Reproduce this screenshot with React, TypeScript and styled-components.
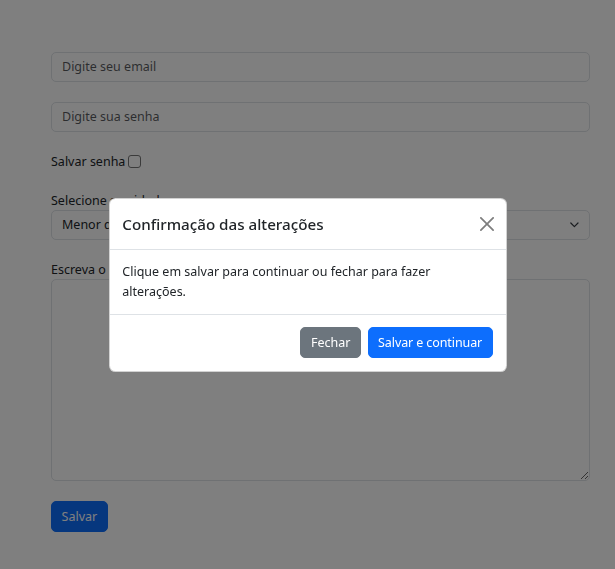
import React from "react";
import styled, { createGlobalStyle } from "styled-components";

const Global = createGlobalStyle`
  *, *::before, *::after { box-sizing: border-box; }
  html, body { margin: 0; padding: 0; background: #fff; }
  body {
    font-family: "Noto Sans", "Open Sans", sans-serif;
    font-size: 12.5px;
    line-height: 19.2px;
    color: #212529;
  }
`;

const Page = styled.div`
  padding: 51.5px 25px 40px 51px;
`;

const Form = styled.form`
  display: flex;
  flex-direction: column;
  gap: 20px;
`;

const Input = styled.input`
  display: block;
  width: 100%;
  height: 30px;
  padding: 0 10px;
  font: inherit;
  color: #212529;
  background: #fff;
  border: 1px solid #dee2e6;
  border-radius: 5px;
  outline: none;
  &::placeholder { color: rgba(33, 37, 41, 0.75); }
`;

const CheckRow = styled.label`
  display: flex;
  align-items: center;
  gap: 3px;
  height: 19.2px;
`;

const CheckBox = styled.span`
  display: inline-block;
  width: 13px;
  height: 13px;
  border: 1px solid #767676;
  border-radius: 3px;
  background: #fff;
  margin-top: 1px;
`;

const Group = styled.div`
  display: flex;
  flex-direction: column;
`;

const Label = styled.label`
  display: block;
  line-height: 19.2px;
`;

const SelectWrap = styled.div`
  position: relative;
  height: 30px;
`;

const Select = styled.select`
  appearance: none;
  width: 100%;
  height: 30px;
  padding: 0 36px 0 10px;
  font: inherit;
  color: #212529;
  background: #fff;
  border: 1px solid #dee2e6;
  border-radius: 5px;
  outline: none;
`;

const Chevron = styled.svg`
  position: absolute;
  right: 9.6px;
  top: 10px;
  width: 12.8px;
  height: 9.6px;
  pointer-events: none;
`;

const TextArea = styled.textarea`
  display: block;
  width: 100%;
  height: 202px;
  padding: 5px 10px;
  font: inherit;
  color: #212529;
  background: #fff;
  border: 1px solid #dee2e6;
  border-radius: 5px;
  outline: none;
  resize: vertical;
`;

const Button = styled.button<{ $variant: "primary" | "secondary" }>`
  font: inherit;
  line-height: 19.2px;
  padding: 4.8px 9.6px;
  border-radius: 5px;
  border: 1px solid ${(p) => (p.$variant === "primary" ? "#0d6efd" : "#6c757d")};
  background: ${(p) => (p.$variant === "primary" ? "#0d6efd" : "#6c757d")};
  color: #fff;
  cursor: pointer;
`;

const SubmitButton = styled(Button)`
  align-self: flex-start;
`;

const Backdrop = styled.div`
  position: fixed;
  inset: 0;
  background: rgba(0, 0, 0, 0.5);
  display: flex;
  align-items: center;
  justify-content: center;
  padding-top: 1px;
`;

const Modal = styled.div`
  width: 398px;
  background: #fff;
  border: 1px solid rgba(0, 0, 0, 0.175);
  border-radius: 6.4px;
  overflow: hidden;
`;

const Header = styled.div`
  display: flex;
  align-items: center;
  padding: 12.8px;
  border-bottom: 1px solid #dee2e6;
`;

const Title = styled.h5`
  margin: 0;
  font-size: 15.2px;
  font-weight: 500;
  line-height: 24px;
`;

const Close = styled.button`
  margin: -3.2px -4.6px -3.2px auto;
  width: 20px;
  height: 20px;
  padding: 3px;
  border: 0;
  background: transparent;
  opacity: 0.5;
  display: flex;
  align-items: center;
  justify-content: center;
  cursor: pointer;
`;

const Body = styled.div`
  padding: 12.8px;
  line-height: 19.2px;
`;

const Footer = styled.div`
  display: flex;
  justify-content: flex-end;
  align-items: center;
  padding: 9.6px 9.6px 9.6px 9.6px;
  border-top: 1px solid #dee2e6;
  & > * { margin: 3.2px; }
`;

const WideButton = styled(Button)`
  letter-spacing: -0.1px;
`;

export default function App() {
  return (
    <>
      <Global />
      <Page>
        <Form onSubmit={(e) => e.preventDefault()}>
          <Input type="email" placeholder="Digite seu email" />
          <Input type="password" placeholder="Digite sua senha" />
          <CheckRow>
            Salvar senha <CheckBox />
          </CheckRow>
          <Group>
            <Label>Selecione sua idade:</Label>
            <SelectWrap>
              <Select defaultValue="menor">
                <option value="menor">Menor de 18 anos</option>
                <option value="maior">Maior de 18 anos</option>
              </Select>
              <Chevron viewBox="0 0 16 16">
                <path d="m2 5 6 6 6-6" fill="none" stroke="#343a40" strokeWidth="2" strokeLinecap="round" strokeLinejoin="round" />
              </Chevron>
            </SelectWrap>
          </Group>
          <Group>
            <Label>Escreva o seu comentário:</Label>
            <TextArea />
          </Group>
          <SubmitButton $variant="primary" type="submit">Salvar</SubmitButton>
        </Form>
      </Page>
      <Backdrop>
        <Modal role="dialog">
          <Header>
            <Title>Confirmação das alterações</Title>
            <Close aria-label="Fechar">
              <svg viewBox="0 0 16 16" width="14" height="14">
                <path
                  fill="#000"
                  d="M.293.293a1 1 0 0 1 1.414 0L8 6.586 14.293.293a1 1 0 1 1 1.414 1.414L9.414 8l6.293 6.293a1 1 0 0 1-1.414 1.414L8 9.414l-6.293 6.293a1 1 0 0 1-1.414-1.414L6.586 8 .293 1.707a1 1 0 0 1 0-1.414z"
                />
              </svg>
            </Close>
          </Header>
          <Body>Clique em salvar para continuar ou fechar para fazer alterações.</Body>
          <Footer>
            <Button $variant="secondary">Fechar</Button>
            <WideButton $variant="primary">Salvar e continuar</WideButton>
          </Footer>
        </Modal>
      </Backdrop>
    </>
  );
}
